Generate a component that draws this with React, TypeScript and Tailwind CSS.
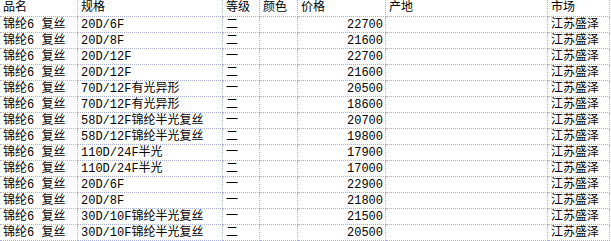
const header = ['品名', '规格', '等级', '颜色', '价格', '产地', '市场'];

const rows: [string, string, string, number][] = [
  ['锦纶6 复丝', '20D/6F', '二', 22700],
  ['锦纶6 复丝', '20D/8F', '二', 21600],
  ['锦纶6 复丝', '20D/12F', '一', 22700],
  ['锦纶6 复丝', '20D/12F', '二', 21600],
  ['锦纶6 复丝', '70D/12F有光异形', '一', 20500],
  ['锦纶6 复丝', '70D/12F有光异形', '二', 18600],
  ['锦纶6 复丝', '58D/12F锦纶半光复丝', '一', 20700],
  ['锦纶6 复丝', '58D/12F锦纶半光复丝', '二', 19800],
  ['锦纶6 复丝', '110D/24F半光', '一', 17900],
  ['锦纶6 复丝', '110D/24F半光', '二', 17000],
  ['锦纶6 复丝', '20D/6F', '一', 22900],
  ['锦纶6 复丝', '20D/8F', '一', 21800],
  ['锦纶6 复丝', '30D/10F锦纶半光复丝', '一', 21500],
  ['锦纶6 复丝', '30D/10F锦纶半光复丝', '二', 20500],
];

const cols = 'grid grid-cols-[78px_145px_37px_38px_88px_162px_62px]';
const cell = 'border-r border-b border-dotted border-[#aab0d8] pl-[3px] pt-px whitespace-pre overflow-hidden';

export default function App() {
  return (
    <div
      className="w-[611px] h-[241px] bg-white text-black text-[12px] overflow-hidden"
      style={{ fontFamily: '"Liberation Mono", "Noto Sans CJK SC", monospace' }}
    >
      <div className={`${cols} h-[17px] leading-[15px]`}>
        {header.map((h) => (
          <div key={h} className={cell}>
            {h}
          </div>
        ))}
      </div>
      {rows.map((r, i) => (
        <div key={i} className={`${cols} h-[16px] leading-[14px]`}>
          <div className={cell}>{r[0]}</div>
          <div className={cell}>{r[1]}</div>
          <div className={cell}>{r[2]}</div>
          <div className={cell}></div>
          <div className={`${cell} text-right pr-[2px]`}>{r[3]}</div>
          <div className={cell}></div>
          <div className={cell}>江苏盛泽</div>
        </div>
      ))}
    </div>
  );
}
